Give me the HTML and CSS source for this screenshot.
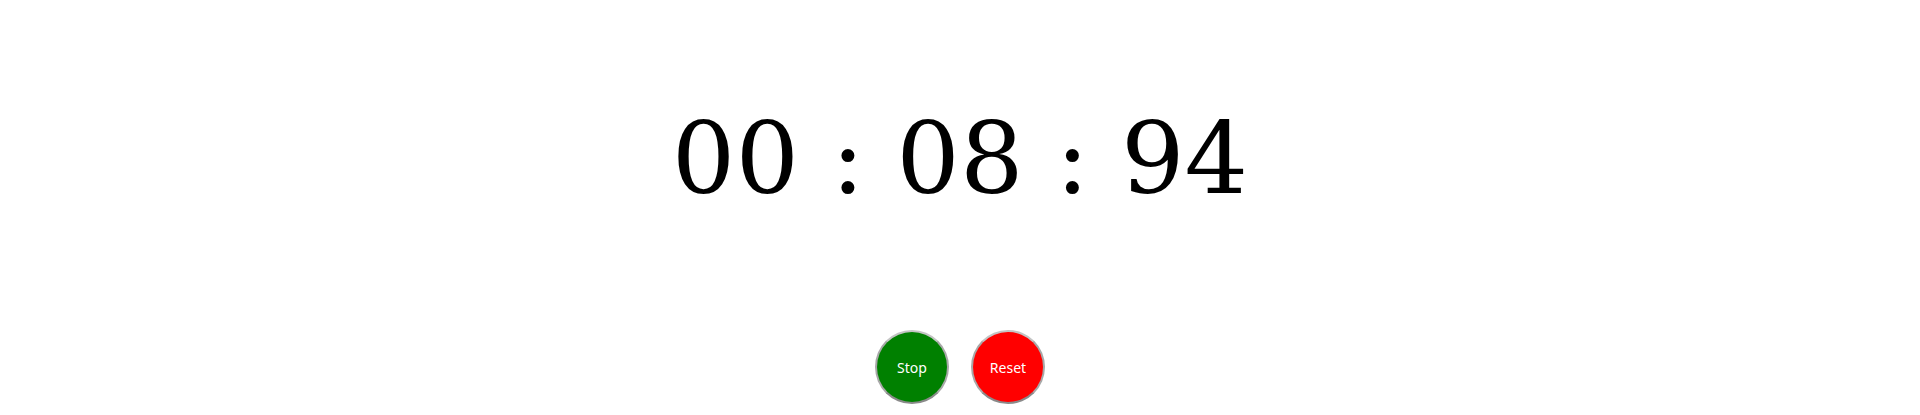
FILE: index.html
```html
<!DOCTYPE html>
<html>
<head>
<meta charset="utf-8">
<title>Stopwatch</title>
<link rel="stylesheet" href="styles.css">
</head>
<body>
<main class="stopwatch">
  <div class="display">00 : 08 : 94</div>
  <div class="controls">
    <button class="btn btn-stop">Stop</button>
    <button class="btn btn-reset">Reset</button>
  </div>
</main>
</body>
</html>
```
FILE: styles.css
```css
html, body {
  margin: 0;
  padding: 0;
  background: #ffffff;
}

.stopwatch {
  display: flex;
  flex-direction: column;
  align-items: center;
  padding-top: 101px;
}

.display {
  font-family: "DejaVu Serif", serif;
  font-size: 100px;
  line-height: 116px;
  color: #000000;
  white-space: pre;
}

.controls {
  display: flex;
  gap: 22px;
  margin-top: 113px;
}

.btn {
  box-sizing: border-box;
  width: 74px;
  height: 74px;
  border-radius: 50%;
  border: 2px solid #c4c4c4;
  border-bottom-color: #8a8a8a;
  border-left-color: #a8a8a8;
  border-right-color: #a8a8a8;
  padding: 0;
  color: #ffffff;
  font-family: "Noto Sans", sans-serif;
  font-size: 14px;
  cursor: pointer;
}

.btn-stop {
  background-color: #008000;
}

.btn-reset {
  background-color: #ff0000;
}
```
